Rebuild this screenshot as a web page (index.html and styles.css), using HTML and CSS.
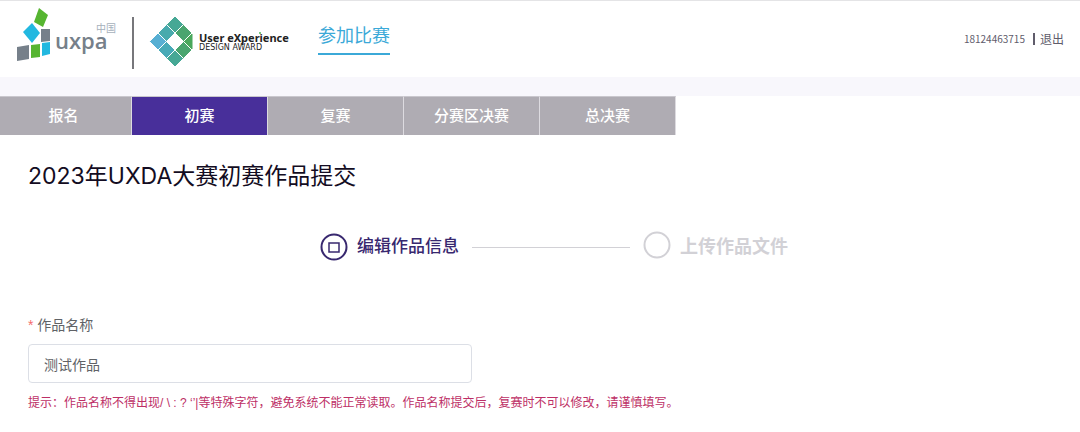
FILE: index.html
```html
<!DOCTYPE html>
<html lang="zh-CN">
<head>
  <meta charset="UTF-8">
  <meta name="viewport" content="width=device-width, initial-scale=1.0">
  <title>2023年UXDA大赛初赛作品提交</title>
  <link rel="stylesheet" href="styles.css">
</head>
<body>
  <header class="header">
    <svg class="logo" width="276" height="76" viewBox="0 -8 276 76" role="img" aria-label="uxpa中国 User eXperience Design Award">
      <!-- uxpa -->
      <path fill="#56b531" d="M23 -1 L32 6 L27 18 L18 13 Z"/>
      <path fill="#22b8e0" d="M16 14 L24 24 L16 34 L7 23 Z"/>
      <path fill="#76808a" d="M25 20 H34 V32 L25 33 Z"/>
      <path fill="#76808a" d="M1 38 L13 36 V50 L1 52 Z"/>
      <path fill="#56b531" d="M15 36 L24 35 V48 L15 49 Z"/>
      <path fill="#22b8e0" d="M26 34 L34 33 V45 L26 47 Z"/>
      <text class="logo-uxpa" x="39" y="40">uxpa</text>
      <text class="logo-cn" x="80" y="23">中国</text>
      <path fill="#77777b" d="M116 8 H118 V60 H116 Z"/>
      <!-- design award -->
      <g stroke="#fff">
        <path fill="#46a895" d="M159 7 L167.500 15.500 L159 24 L150.500 15.500 Z"/>
        <path fill="#48aaad" d="M150.500 15.500 L159 24 L150.500 32.500 L142 24 Z"/>
        <path fill="#57afd3" d="M142 24 L150.500 32.500 L142 41 L133.500 32.500 Z"/>
        <path fill="#49a56f" d="M167.500 15.500 L176 24 L167.500 32.500 L159 24 Z"/>
        <path fill="#49a85c" d="M176 24 L177 25 V40 L176 41 L167.500 32.500 Z"/>
        <path fill="#47aab7" d="M142 41 L150.500 32.500 L159 41 L150.500 49.500 Z"/>
        <path fill="#49a56f" d="M176 41 L167.500 49.500 L159 41 L167.500 32.500 Z"/>
        <path fill="#46a895" d="M159 41 L167.500 49.500 L159 58 L150.500 49.500 Z"/>
        <path fill="#fff" d="M159 24 L167.500 32.500 L159 41 L150.500 32.500 Z"/>
      </g>
      <text class="logo-award" x="183" y="33">User eXperience</text>
      <circle cx="244" cy="24" r="1" fill="#49b85c"/>
      <text class="logo-sub" x="183" y="41">DESIGN AWARD</text>
    </svg>
    <a class="header-link" href="#">参加比赛</a>
    <div class="user">
      <span>18124463715</span>
      <a class="logout" href="#">退出</a>
    </div>
  </header>

  <nav class="tabs">
    <a class="tab" href="#">报名</a>
    <a class="tab active" href="#">初赛</a>
    <a class="tab" href="#">复赛</a>
    <a class="tab" href="#">分赛区决赛</a>
    <a class="tab" href="#">总决赛</a>
  </nav>

  <main class="content">
    <h1 class="title">2023年UXDA大赛初赛作品提交</h1>

    <div class="steps">
      <div class="step current">
        <svg width="28" height="32" viewBox="0 0 28 32" fill="none" stroke="currentColor" stroke-width="2">
          <circle cx="14" cy="16" r="12.500"/>
          <rect x="9" y="12" width="10" height="9" stroke-width="1.500"/>
        </svg>
        <span>编辑作品信息</span>
      </div>
      <div class="step-line"></div>
      <div class="step next">
        <svg width="28" height="32" viewBox="0 0 28 32" fill="none" stroke="currentColor" stroke-width="2">
          <circle cx="14" cy="14" r="12.500"/>
        </svg>
        <span>上传作品文件</span>
      </div>
    </div>

    <form class="form">
      <label class="label" for="work-name"><span class="required">*</span> 作品名称</label>
      <input class="input" type="text" id="work-name" value="测试作品">
      <p class="hint">提示：作品名称不得出现/ \ : ? ‘’|等特殊字符，避免系统不能正常读取。作品名称提交后，复赛时不可以修改，请谨慎填写。</p>
    </form>
  </main>
</body>
</html>
```
FILE: styles.css
```css
* {
  box-sizing: border-box;
  margin: 0;
  padding: 0;
}

body {
  font-family: "Liberation Sans", "Noto Sans CJK SC", sans-serif;
  background: #fff;
  color: #606266;
}

a {
  text-decoration: none;
}

/* header */
.header {
  display: flex;
  align-items: center;
  height: 77px;
  padding: 0 16px;
  border-top: 1px solid #e4e4e6;
}

.logo {
  flex: none;
}

.logo-uxpa {
  font: 600 22px "Open Sans", sans-serif;
  fill: #76808a;
}

.logo-cn {
  font: 10px "Noto Sans CJK SC", sans-serif;
  fill: #a5b0bb;
}

.logo-award {
  font: bold 11px "Noto Sans", sans-serif;
  fill: #222;
}

.logo-sub {
  font: 8px "DejaVu Sans", sans-serif;
  fill: #222;
}

.header-link {
  margin-left: 26px;
  padding-bottom: 4px;
  border-bottom: 2px solid #3ba9d8;
  color: #3ba9d8;
  font-size: 18px;
  line-height: 26px;
}

.user {
  display: flex;
  align-items: center;
  gap: 8px;
  margin-left: auto;
  font-family: "Noto Sans CJK SC", sans-serif;
  font-size: 10px;
  line-height: 12px;
  color: #605c6b;
}

.logout {
  padding-left: 5px;
  border-left: 2px solid #605c6b;
  color: inherit;
  font-size: 12px;
}

/* tabs */
.tabs {
  display: flex;
  padding-top: 19px;
  margin-left: -4px;
  background: linear-gradient(#f8f7fc 19px, #fff 19px);
}

.tab {
  width: 136px;
  height: 39px;
  border-top: 1px solid #c9c7cd;
  border-right: 1px solid #dddbe0;
  background: #afacb3;
  color: #fff;
  font-size: 15px;
  font-weight: 500;
  line-height: 38px;
  text-align: center;
}

.tab.active {
  background: #482f9a;
}

/* content */
.content {
  padding: 25px 0 19px 28px;
}

.title {
  font-family: Inter, "Noto Sans CJK SC", sans-serif;
  font-size: 23px;
  font-weight: 400;
  line-height: 32px;
  color: #130c22;
}

.steps {
  display: flex;
  justify-content: center;
  align-items: center;
  gap: 13px;
  margin-top: 38px;
}

.step {
  display: flex;
  align-items: center;
  gap: 9px;
  line-height: 34px;
}

.current {
  color: #38286f;
  font-size: 17px;
  font-weight: 500;
}

.next {
  color: #d2d1d6;
  font-size: 18px;
  font-weight: bold;
}

.step-line {
  width: 158px;
  height: 1px;
  background: #d2d1d6;
}

/* form */
.form {
  margin-top: 51px;
}

.label {
  display: block;
  font-size: 14px;
  line-height: 20px;
}

.required {
  color: #f56c6c;
}

.input {
  display: block;
  width: 100%;
  max-width: 444px;
  height: 39px;
  margin-top: 9px;
  padding: 0 15px;
  border: 1px solid #dcdfe6;
  border-radius: 4px;
  color: #606266;
  font-family: inherit;
  font-size: 14px;
}

.hint {
  margin-top: 10px;
  color: #bd2f66;
  font-size: 12px;
  line-height: 20px;
}
```
